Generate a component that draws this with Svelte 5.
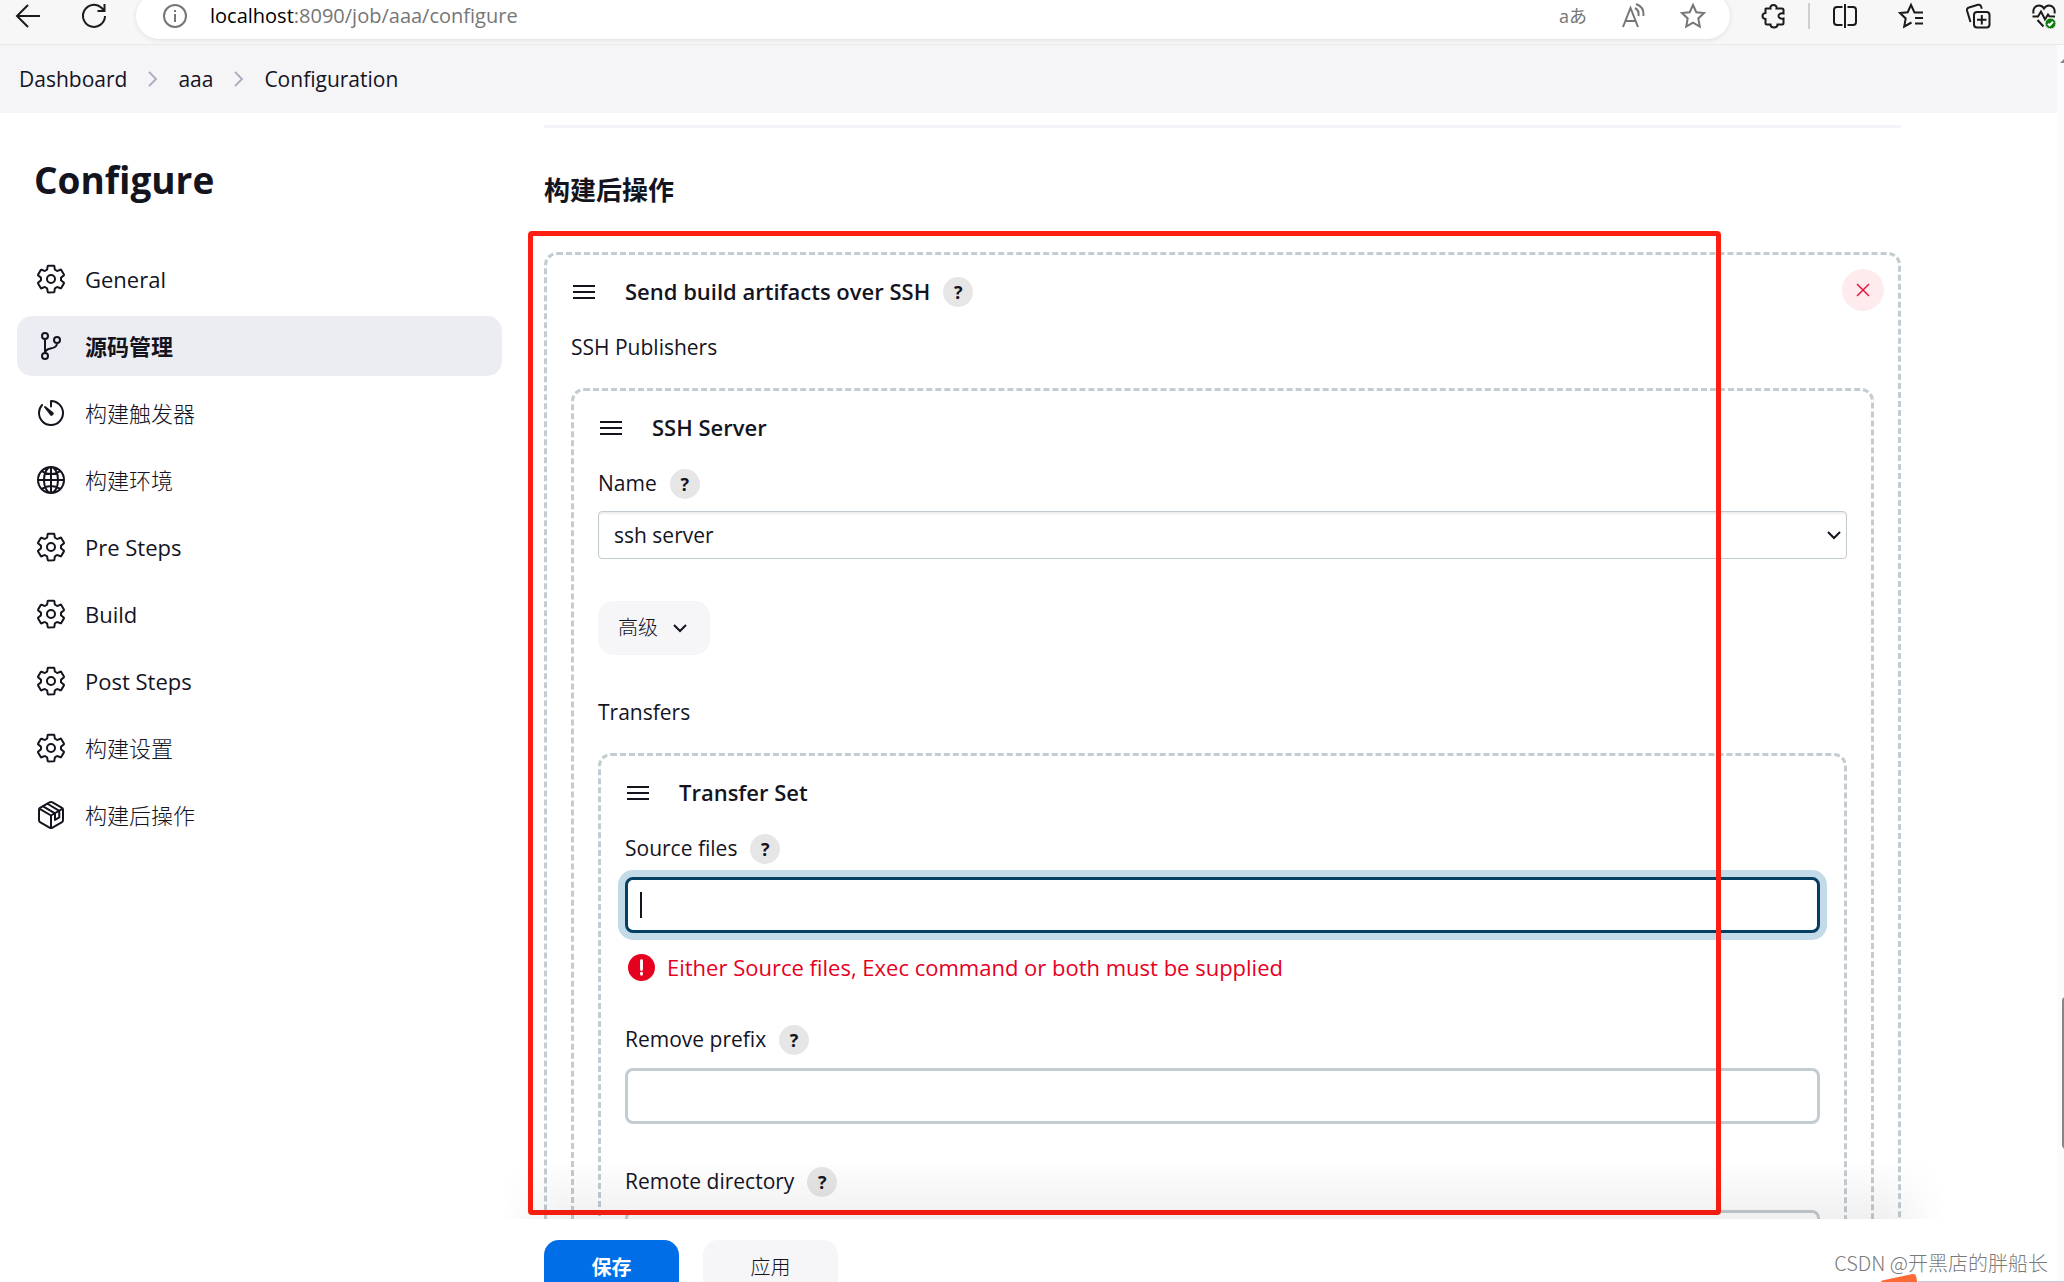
<script>
  const gear = "M416.4 256a154 154 0 01-1.5 20.8l45.2 35.5a10.8 10.8 0 012.4 13.7l-42.8 74a10.8 10.8 0 01-13.1 4.6l-44.9-18.1a16 16 0 00-15.2 1.8A164 164 0 01325 400.8a16 16 0 00-8.8 12.1l-6.7 47.9a11 11 0 01-10.7 9.2h-85.6a11 11 0 01-10.7-8.9l-6.7-47.8a16 16 0 00-9-12.2 155 155 0 01-21.5-12.6 16 16 0 00-15.1-1.7l-44.9 18a10.8 10.8 0 01-13.1-4.6l-42.8-74a10.8 10.8 0 012.5-13.7l38.2-30a16 16 0 006-14.1c-.4-4.2-.6-8.3-.6-12.5s.2-8.3.6-12.3a16 16 0 00-6.1-14l-38.2-30A10.8 10.8 0 0149.5 186l42.8-74a10.8 10.8 0 0113.1-4.6l44.9 18.1a16 16 0 0015.2-1.8A164 164 0 01187 111.2a16 16 0 008.8-12.1l6.7-47.9A11 11 0 01213.2 42h85.6a11 11 0 0110.7 8.9l6.7 47.8a16 16 0 009 12.2 155 155 0 0121.5 12.6 16 16 0 0015.1 1.7l44.9-18a10.8 10.8 0 0113.1 4.6l42.8 74a10.8 10.8 0 01-2.5 13.7l-38.2 30a16 16 0 00-6 14.1c.3 4.1.5 8.3.5 12.4zM256 192a64 64 0 100 128 64 64 0 000-128z"
  const branch = "M160 48a48 48 0 100 96 48 48 0 000-96zM160 368a48 48 0 100 96 48 48 0 000-96zM352 112a48 48 0 100 96 48 48 0 000-96zM160 368V144M352 208c0 128-192 48-192 160"
  const timer = "M112.9 128A191.9 191.9 0 0064 254c-1.2 106.4 85.7 193.8 192 194 106.2.2 192-85.8 192-192 0-104.5-83.6-189.6-187.5-192a4.4 4.4 0 00-4.5 4.4V152M160 160l88 110a18 18 0 1022-22z"
  const globe = "M256 48C141 48 48 141 48 256s93 208 208 208 208-93 208-208S371 48 256 48zM256 48c-58 0-112.7 93-112.7 208S198 464 256 464s112.7-93 112.7-208S314 48 256 48zM117.3 117.3c38.3 27.2 86.4 43.4 138.7 43.4s100.4-16.2 138.7-43.4M394.7 394.7c-38.3-27.2-86.4-43.4-138.7-43.4s-100.4 16.2-138.7 43.4M256 48v416M464 256H48"
  const box = "M448 341V171a32 32 0 00-16-28L280 54.500a48 48 0 00-48 0L80 143a32 32 0 00-16 28v170a32 32 0 0016 28l152 88.500a48 48 0 0048 0l152-88.500a32 32 0 0016-28zM69 154l187 110 187-110M256 464V264M130 118l190 112v104l68-40V190L200 76"

  const sections = [
    { name: "General", icon: gear },
    { name: "源码管理", icon: branch, lang: "zh" },
    { name: "构建触发器", icon: timer, lang: "zh" },
    { name: "构建环境", icon: globe, lang: "zh" },
    { name: "Pre Steps", icon: gear },
    { name: "Build", icon: gear },
    { name: "Post Steps", icon: gear },
    { name: "构建设置", icon: gear, lang: "zh" },
    { name: "构建后操作", icon: box, lang: "zh" }
  ]

  let current = $state("源码管理")
  let sourceFiles = $state("")
  let removePrefix = $state("")
  let remoteDirectory = $state("")
</script>

{#snippet help(topic)}
  <button class="help" type="button" aria-label="Help for {topic}">?</button>
{/snippet}

{#snippet handle()}
  <svg class="handle" viewBox="0 0 22 16" aria-hidden="true">
    <path d="M0 2h22M0 8h22M0 14h22" />
  </svg>
{/snippet}

<div class="window">
  <header class="browser">
    <div class="toolbar">
      <button class="tool back" aria-label="Back">
        <svg viewBox="0 0 24 24"><path d="M24 12H1M12 1L1 12l11 11" /></svg>
      </button>
      <button class="tool reload" aria-label="Reload">
        <svg viewBox="0 0 24 24"><path d="M23 12a11 11 0 11-3.500-8.200L22 6.500M22.500 0v7h-7" /></svg>
      </button>

      <div class="address">
        <svg class="muted" viewBox="0 0 24 24"><circle cx="12" cy="12" r="11" /><path d="M12 10v8M12 6v2" /></svg>
        <span class="url"><b>localhost</b>:8090/job/aaa/configure</span>
        <span class="translate">aあ</span>
        <svg class="muted" viewBox="0 0 24 24"><path d="M1 23L8.500 4 16 23M4 17h9.500M13 4c3 1.500 4 4.500 3.500 8M14 0c6 2 8 7 7.500 12" /></svg>
        <svg class="muted" viewBox="0 0 24 24"><path d="M12 1l3.300 7.200 7.700.9-5.700 5.300 1.500 8.100L12 18.600l-6.800 3.900 1.500-8.100L1 9.100l7.700-.9z" /></svg>
      </div>

      <div class="tools">
        <button class="tool" aria-label="Extensions">
          <svg viewBox="0 0 24 24"><path d="M4 4.500h4.500C8 2.500 9.500 1 11.500 1S15 2.500 14.500 4.500H20A1.500 1.500 0 0121.500 6v3.500c-3-.8-5 .7-5 2.500s2 3.300 5 2.500V19a1.500 1.500 0 01-1.500 1.500h-4.500c0 2-1.500 3-3.500 3s-3.500-1-3.500-3H5A1.500 1.500 0 013.500 19v-4C1.500 14.800.5 13.500.5 12s1-2.800 3-3V5z" /></svg>
        </button>
        <i class="rule"></i>
        <button class="tool" aria-label="Split screen">
          <svg viewBox="0 0 24 24"><path d="M12 0v24M9.500 3H4a3 3 0 00-3 3v12a3 3 0 003 3h5.500M14.500 3H20a3 3 0 013 3v12a3 3 0 01-3 3h-5.500" /></svg>
        </button>
        <button class="tool" aria-label="Favorites">
          <svg viewBox="0 0 24 24"><path d="M24 8.500h-8.500L12 1 8.700 8.200 1 9.100l5.700 5.300-1.500 8.100 7.300-4M16 14h8M16 19.500h8" /></svg>
        </button>
        <button class="tool" aria-label="Collections">
          <svg viewBox="0 0 24 24"><rect x="8" y="8" width="15.500" height="15.500" rx="3" /><path d="M15.800 11v9.500M11 15.800h9.500M4.500 18L1 6.500a2.500 2.500 0 012-3L12 .8a2.500 2.500 0 013 1.500l.8 2.500" /></svg>
        </button>
        <button class="tool" aria-label="Browser essentials">
          <svg viewBox="0 0 24 24">
            <path d="M1.500 9.500C.5 4 4 1.500 7 1.500c2.500 0 4 1.300 5 3 1-1.700 2.500-3 5-3 3 0 6.500 2.500 5.500 8M.5 12.500H6l3-5 4 8 3-5 1.500 2H23M5.500 16l6 6.500" />
            <circle class="ok" cx="18.500" cy="19.500" r="5.500" />
            <path class="tick" d="M16 19.700l1.700 1.600 3.300-3.500" />
          </svg>
        </button>
      </div>
    </div>
  </header>

  <div class="page">
    <div class="content">
      <nav class="breadcrumb" aria-label="Breadcrumb">
        <a href="#dashboard">Dashboard</a>
        <svg viewBox="0 0 10 18" aria-hidden="true"><path d="M1 1l8 8-8 8" /></svg>
        <a href="#aaa">aaa</a>
        <svg viewBox="0 0 10 18" aria-hidden="true"><path d="M1 1l8 8-8 8" /></svg>
        <a href="#configuration">Configuration</a>
      </nav>

      <div class="columns">
        <aside>
          <h1>Configure</h1>
          <nav class="sections" aria-label="Sections">
            {#each sections as section}
              <a
                href="#{section.name}"
                lang={section.lang}
                class:active={current === section.name}
                onclick={() => (current = section.name)}
              >
                <svg viewBox="0 0 512 512" aria-hidden="true"><path d={section.icon} /></svg>
                {section.name}
              </a>
            {/each}
          </nav>
        </aside>

        <main>
          <hr />
          <h2 lang="zh">构建后操作</h2>

          <section class="chunk">
            <button class="remove" aria-label="Remove">
              <svg viewBox="0 0 12 12"><path d="M0 0l12 12M12 0L0 12" /></svg>
            </button>
            <div class="row title">
              {@render handle()}
              <h3>Send build artifacts over SSH</h3>
              {@render help("Send build artifacts over SSH")}
            </div>
            <div class="row">SSH Publishers</div>

            <section class="chunk">
              <div class="row title">
                {@render handle()}
                <h3>SSH Server</h3>
              </div>
              <div class="row">
                <label for="server">Name</label>
                {@render help("Name")}
              </div>
              <div class="select">
                <select id="server">
                  <option>ssh server</option>
                </select>
                <svg viewBox="0 0 14 8" aria-hidden="true"><path d="M1 1l6 6 6-6" /></svg>
              </div>

              <button class="advanced" lang="zh">
                高级
                <svg viewBox="0 0 14 8" aria-hidden="true"><path d="M1 1l6 6 6-6" /></svg>
              </button>

              <div class="row">Transfers</div>

              <section class="chunk">
                <div class="row title">
                  {@render handle()}
                  <h3>Transfer Set</h3>
                </div>
                <div class="row">
                  <label for="source">Source files</label>
                  {@render help("Source files")}
                </div>
                <div class="field focused">
                  <span class="caret"></span>
                  <input id="source" type="text" bind:value={sourceFiles} />
                </div>
                <div class="error">
                  <svg viewBox="0 0 28 28" aria-hidden="true">
                    <circle cx="14" cy="14" r="14" />
                    <path d="M14 7v9M14 20v1" />
                  </svg>
                  Either Source files, Exec command or both must be supplied
                </div>

                <div class="row next">
                  <label for="prefix">Remove prefix</label>
                  {@render help("Remove prefix")}
                </div>
                <div class="field"><input id="prefix" type="text" bind:value={removePrefix} /></div>

                <div class="row next">
                  <label for="directory">Remote directory</label>
                  {@render help("Remote directory")}
                </div>
                <div class="field"><input id="directory" type="text" bind:value={remoteDirectory} /></div>
              </section>
            </section>
          </section>
        </main>
      </div>
    </div>

    <div class="scrollbar">
      <span class="arrow"></span>
      <span class="thumb"></span>
    </div>
  </div>

  <div class="highlight"></div>

  <footer>
    <button class="save" lang="zh">保存</button>
    <button class="apply" lang="zh">应用</button>
  </footer>

  <div class="corner"></div>
  <div class="watermark" lang="zh">CSDN @开黑店的胖船长</div>
</div>

<style>
  :global(body) {
    background: #fff;
  }

  .window {
    --text: #14141f;
    --line: #c3ccd1;
    position: relative;
    display: flex;
    flex-direction: column;
    height: 100vh;
    overflow: hidden;
    color: var(--text);
    font-family: "Open Sans", "Noto Sans CJK SC", sans-serif;
    font-size: 21px;
    line-height: 28px;
  }

  button,
  input,
  select {
    font: inherit;
    color: inherit;
    margin: 0;
    border: 0;
    padding: 0;
    box-sizing: border-box;
  }

  button {
    cursor: pointer;
  }

  a {
    color: inherit;
    text-decoration: none;
  }

  svg {
    fill: none;
    stroke: currentColor;
    stroke-width: 2;
    flex: none;
    overflow: visible;
  }

  /* Browser toolbar */
  .browser {
    flex: none;
    height: 44px;
    background: #f7f7f7;
    border-bottom: 1px solid #e9e9e9;
    overflow: hidden;
  }

  .toolbar {
    display: flex;
    align-items: center;
    height: 46px;
    margin-top: -7px;
    padding: 0 8px 0 16px;
  }

  .toolbar svg {
    display: block;
    width: 24px;
    height: 24px;
  }

  .tool {
    background: none;
    color: #1b1b1b;
  }

  .reload {
    margin: 0 30px 0 42px;
  }

  .address {
    flex: 1;
    display: flex;
    align-items: center;
    height: 46px;
    box-sizing: border-box;
    padding: 0 25px 0 27px;
    border-radius: 23px;
    background: #fff;
    box-shadow: 0 1px 5px rgba(0, 0, 0, 0.1);
  }

  .muted {
    color: #767676;
  }

  .url {
    flex: 1;
    margin-left: 23px;
    font-size: 20px;
    color: #767676;
  }

  .url b {
    font-weight: 400;
    color: #000;
  }

  .translate {
    font-size: 18px;
    color: #767676;
  }

  .address .muted + .muted,
  .translate + .muted {
    margin-left: 35px;
  }

  .tools {
    display: flex;
    align-items: center;
    justify-content: space-between;
    width: 294px;
    margin-left: 32px;
  }

  .rule {
    width: 2px;
    height: 26px;
    background: #d0d0d0;
  }

  .tools .rule {
    margin: 0 -20px;
  }

  .ok {
    fill: #107c10;
    stroke: #f7f7f7;
    stroke-width: 1;
  }

  .tick {
    stroke: #fff;
  }

  /* Page */
  .page {
    flex: 1;
    min-height: 0;
    display: flex;
  }

  .content {
    flex: 1;
    min-width: 0;
  }

  .scrollbar {
    position: relative;
    width: 7px;
    background: #fbfbfb;
    overflow: hidden;
  }

  .arrow {
    position: absolute;
    left: 3px;
    top: 13px;
    border: 5px solid transparent;
    border-top-width: 0;
    border-bottom-color: #858585;
  }

  .thumb {
    position: absolute;
    left: 5px;
    top: 77%;
    width: 8px;
    height: 152px;
    border-radius: 4px;
    background: #868686;
  }

  .breadcrumb {
    display: flex;
    align-items: center;
    gap: 21px;
    height: 68px;
    padding-left: 19px;
    background: #f5f5f8;
  }

  .breadcrumb svg {
    width: 9px;
    height: 16px;
    color: #a9a9bd;
  }

  .columns {
    display: grid;
    grid-template-columns: 485px 1fr;
    gap: 42px;
    padding: 0 156px 0 17px;
  }

  h1 {
    margin: 43px 0 45px 17px;
    font-size: 37px;
    font-weight: 700;
    line-height: 48px;
  }

  .sections {
    display: flex;
    flex-direction: column;
    gap: 7px;
  }

  .sections a {
    display: flex;
    align-items: center;
    gap: 18px;
    height: 60px;
    padding-left: 18px;
    border-radius: 15px;
    font-size: 22px;
  }

  .sections a:lang(zh) {
    font-weight: 300;
  }

  .sections a.active {
    background: #ecedf3;
    font-weight: 700;
  }

  .sections svg {
    width: 32px;
    height: 32px;
    stroke-width: 32;
    stroke-linecap: round;
    stroke-linejoin: round;
  }

  hr {
    height: 3px;
    margin: 12px 0 44px;
    border: 0;
    background: #f3f3f8;
  }

  h2 {
    margin: 0 0 44px;
    font-size: 26px;
    line-height: 36px;
  }

  h3 {
    margin: 0;
    font-size: 22px;
    font-weight: 600;
  }

  .chunk {
    position: relative;
    padding: 22px 24px;
    border: 3px dashed var(--line);
    border-radius: 13px;
  }

  .chunk > .chunk {
    margin-top: 25px;
  }

  .row {
    display: flex;
    align-items: flex-start;
    gap: 13px;
    height: 30px;
  }

  .title {
    margin-bottom: 26px;
  }

  .next {
    margin-top: 43px;
  }

  .handle {
    align-self: center;
    width: 22px;
    height: 16px;
    margin: 0 17px 0 2px;
  }

  .help {
    width: 30px;
    height: 30px;
    border-radius: 50%;
    background: #e6e6e6;
    font-size: 18px;
    font-weight: 700;
    line-height: 30px;
  }

  .remove {
    position: absolute;
    top: 14px;
    right: 14px;
    display: grid;
    place-content: center;
    width: 42px;
    height: 42px;
    border-radius: 50%;
    background: #fdebee;
    color: #e6173a;
  }

  .remove svg {
    width: 12px;
    height: 12px;
    stroke-width: 1.500;
  }

  .select {
    position: relative;
    margin-top: 12px;
  }

  .select select {
    display: block;
    width: 100%;
    height: 48px;
    padding: 0 15px;
    border: 1px solid var(--line);
    border-radius: 4px;
    background: #fff;
    box-shadow: inset 0 2px 2px rgba(0, 0, 0, 0.07);
    appearance: none;
  }

  .select svg {
    position: absolute;
    top: 20px;
    right: 6px;
    width: 14px;
    height: 8px;
    pointer-events: none;
  }

  .advanced {
    display: flex;
    align-items: center;
    gap: 15px;
    height: 54px;
    margin: 42px 0 43px;
    padding: 0 23px 0 20px;
    border-radius: 15px;
    background: #f6f6f9;
    font-size: 20px;
    font-weight: 300;
  }

  .advanced svg {
    width: 14px;
    height: 8px;
  }

  .field {
    position: relative;
    margin-top: 13px;
  }

  .field input {
    display: block;
    width: 100%;
    height: 56px;
    padding: 0 12px;
    border: 3px solid var(--line);
    border-radius: 8px;
    background: #fff;
    outline: 0;
  }

  .focused input {
    border-color: #053f63;
    box-shadow: 0 0 0 7px #c3dae8;
  }

  .caret {
    position: absolute;
    left: 15px;
    top: 15px;
    width: 2px;
    height: 26px;
    background: var(--text);
  }

  .error {
    display: flex;
    align-items: center;
    gap: 12px;
    height: 30px;
    margin-top: 19px;
    padding-left: 3px;
    font-size: 22px;
    color: #e6001f;
  }

  .error svg {
    width: 27px;
    height: 27px;
  }

  .error circle {
    fill: #e6001f;
    stroke: none;
  }

  .error path {
    stroke: #fff;
    stroke-width: 3;
    stroke-linecap: round;
  }

  /* Overlays */
  .highlight {
    position: absolute;
    inset: 231px 343px 67px 528px;
    border: 5px solid #ff1f12;
    border-radius: 4px;
    pointer-events: none;
  }

  footer {
    position: absolute;
    left: 502px;
    right: 7px;
    bottom: 0;
    display: flex;
    gap: 24px;
    height: 63px;
    box-sizing: border-box;
    padding: 21px 0 0 42px;
    background: #fff;
  }

  footer::before {
    content: "";
    position: absolute;
    left: 0;
    right: 114px;
    bottom: 100%;
    height: 60px;
    background: linear-gradient(transparent, rgba(0, 0, 0, 0.06));
    mask-image: linear-gradient(90deg, transparent, #000 60px calc(100% - 60px), transparent);
    pointer-events: none;
  }

  footer button {
    width: 135px;
    height: 56px;
    border-radius: 15px;
    background: #f6f6f9;
    font-size: 20px;
    font-weight: 300;
  }

  footer .save {
    background: #006ee6;
    color: #fff;
    font-weight: 700;
  }

  .corner {
    position: absolute;
    right: 0;
    bottom: 0;
    width: 146px;
    height: 1px;
    background: #c5cbdc;
  }

  .corner::before {
    content: "";
    position: absolute;
    right: 100%;
    top: -4px;
    width: 36px;
    height: 20px;
    border-radius: 3px;
    background: #fc6b35;
    transform: rotate(-12deg);
  }

  .watermark {
    position: absolute;
    right: 16px;
    bottom: 5px;
    font-family: "Noto Sans CJK SC", sans-serif;
    font-size: 20px;
    font-weight: 300;
    color: #7a7a7a;
  }
</style>
